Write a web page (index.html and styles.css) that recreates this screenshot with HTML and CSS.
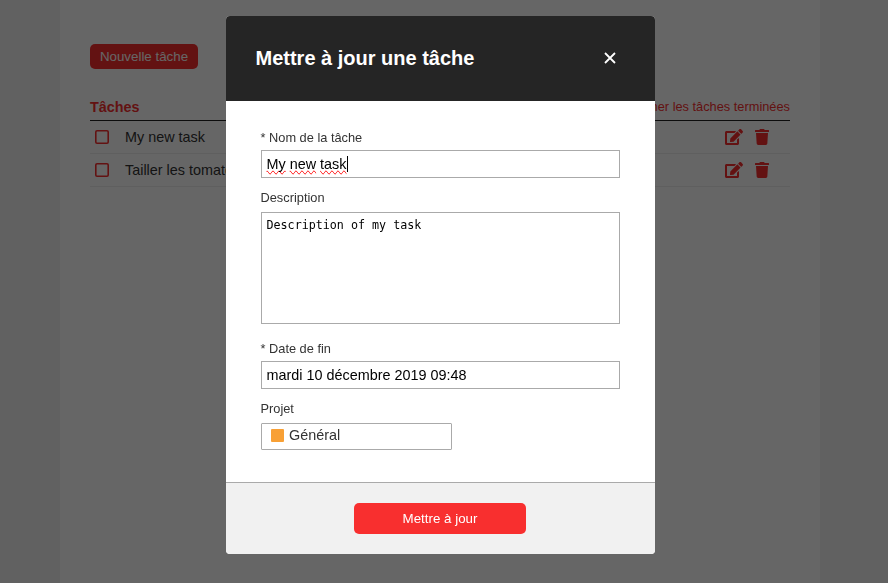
FILE: index.html
```html
<!DOCTYPE html>
<html lang="fr">
<head>
<meta charset="utf-8">
<title>Mettre à jour une tâche</title>
<link rel="stylesheet" href="styles.css">
</head>
<body>
<svg class="sprite" aria-hidden="true">
  <symbol id="edit" viewBox="0 0 576 512"><path d="M402.6 83.2l90.2 90.2c3.8 3.8 3.8 10 0 13.8L274.4 405.6l-92.8 10.3c-12.4 1.4-22.9-9.1-21.5-21.5l10.3-92.8L388.8 83.2c3.8-3.8 10-3.8 13.8 0zm162-22.9l-48.8-48.8c-15.2-15.2-39.9-15.2-55.2 0l-35.4 35.4c-3.8 3.8-3.8 10 0 13.8l90.2 90.2c3.8 3.8 10 3.8 13.8 0l35.4-35.4c15.2-15.3 15.2-40 0-55.2zM384 346.2V448H64V128h229.8c3.2 0 6.2-1.3 8.5-3.5l40-40c7.6-7.6 2.2-20.5-8.5-20.5H48C21.5 64 0 85.5 0 112v352c0 26.5 21.5 48 48 48h352c26.5 0 48-21.5 48-48V306.2c0-10.7-12.9-16-20.5-8.5l-40 40c-2.2 2.3-3.5 5.3-3.5 8.5z"/></symbol>
  <symbol id="trash" viewBox="0 0 448 512"><path d="M432 32H312l-9.4-18.7A24 24 0 0 0 281.1 0H166.8a23.72 23.72 0 0 0-21.4 13.3L136 32H16A16 16 0 0 0 0 48v32a16 16 0 0 0 16 16h416a16 16 0 0 0 16-16V48a16 16 0 0 0-16-16zM53.2 467a48 48 0 0 0 47.9 45h245.8a48 48 0 0 0 47.9-45L416 128H32z"/></symbol>
</svg>
<main class="page">
  <button class="new-task">Nouvelle tâche</button>
  <div class="list-head"><h2>Tâches</h2><a>Supprimer les tâches terminées</a></div>
  <ul class="tasks">
    <li><span class="check"></span><span class="name">My new task</span><svg class="edit"><use href="#edit"/></svg><svg class="trash"><use href="#trash"/></svg></li>
    <li><span class="check"></span><span class="name">Tailler les tomates</span><svg class="edit"><use href="#edit"/></svg><svg class="trash"><use href="#trash"/></svg></li>
  </ul>
</main>
<div class="overlay">
  <section class="modal">
    <header class="modal-head"><h1>Mettre à jour une tâche</h1><svg class="close" viewBox="0 0 12 12"><path d="M1 1L11 11M11 1L1 11"/></svg></header>
    <div class="modal-body">
      <label>* Nom de la tâche</label>
      <div class="field"><span class="typo">My</span>&nbsp;<span class="typo">new</span>&nbsp;<span class="typo">task</span><span class="caret"></span></div>
      <label class="spaced">Description</label>
      <div class="field area">Description of my task</div>
      <label class="spaced date">* Date de fin</label>
      <div class="field">mardi 10 décembre 2019 09:48</div>
      <label class="spaced">Projet</label>
      <div class="field select"><span class="swatch"></span>Général</div>
    </div>
    <footer class="modal-foot"><button class="submit">Mettre à jour</button></footer>
  </section>
</div>
</body>
</html>
```
FILE: styles.css
```css
* { box-sizing: border-box; }
html, body { height: 100%; margin: 0; overflow: hidden; }
body { background: #f2f2f2; font-family: "Liberation Sans", Arial, sans-serif; font-size: 14.4px; color: #333; }
h1, h2, ul { margin: 0; padding: 0; }
button { font-family: inherit; font-size: 13.33px; color: #fff; border: 0; border-radius: 5px; background: #f82f2f; padding: 0; display: block; }
.sprite { display: none; }
.page { width: 760px; height: 583px; margin-left: 60px; padding: 44px 30px 0; background: #fff; }
.new-task { width: 108px; height: 25px; }
.list-head { display: flex; justify-content: space-between; align-items: center; height: 29px; margin-top: 23px; border-bottom: 1px solid #222; color: #f82f2f; }
.list-head h2 { font-size: 14.4px; padding-top: 2px; }
.list-head a { font-size: 12.8px; }
.tasks { list-style: none; }
.tasks li { display: flex; align-items: center; height: 33px; padding: 0 21px 0 5px; border-bottom: 1px solid #eee; }
.check { width: 14px; height: 14px; box-shadow: inset 0 0 0 1.6px #f82f2f; border-radius: 2px; margin-right: 16px; }
.name { flex: 1; }
.edit, .trash { height: 16px; fill: #f82f2f; }
.edit { width: 18px; margin-right: 12px; }
.trash { width: 14px; }
.overlay { position: fixed; inset: 0; background: rgba(0, 0, 0, .6); padding: 16px 0 0 226px; }
.modal { width: 429px; height: 538px; border-radius: 4px; overflow: hidden; background: #fff; display: flex; flex-direction: column; }
.modal-head { height: 85px; background: #252525; color: #fff; display: flex; align-items: center; justify-content: space-between; padding: 0 39px 0 29.5px; }
.modal-head h1 { font-size: 20px; }
.close { width: 12px; height: 12px; stroke: #fff; stroke-width: 1.8; fill: none; margin-bottom: 1px; }
.modal-body { flex: 1; padding: 29px 35px 0 34.5px; }
label { display: block; height: 16px; line-height: 16px; font-size: 12.8px; margin-bottom: 4px; }
label.spaced { margin-top: 12px; margin-bottom: 6px; }
label.date { margin-top: 17px; margin-bottom: 4px; }
.field { height: 28px; border: 1px solid #aaa; padding: 0 5px; display: flex; align-items: center; color: #000; }
.area { height: 112px; align-items: flex-start; padding-top: 5px; font: 11.7px/14px "DejaVu Sans Mono", monospace; }
.select { width: 191px; height: 27px; color: #333; border-radius: 1px; padding: 0 9.5px 3px; }
.swatch { width: 13px; height: 13px; background: #f8a035; border-radius: 1px; margin: 1px 5px 0 0; }
.typo { text-decoration: underline wavy #f33 1px; text-decoration-skip-ink: none; text-decoration-line: spelling-error; }
.caret { width: 1px; height: 16px; background: #000; }
.modal-foot { height: 72px; border-top: 1px solid #aaa; background: #f1f1f1; padding: 20px 0 0 128px; }
.submit { width: 172px; height: 31px; }
```
